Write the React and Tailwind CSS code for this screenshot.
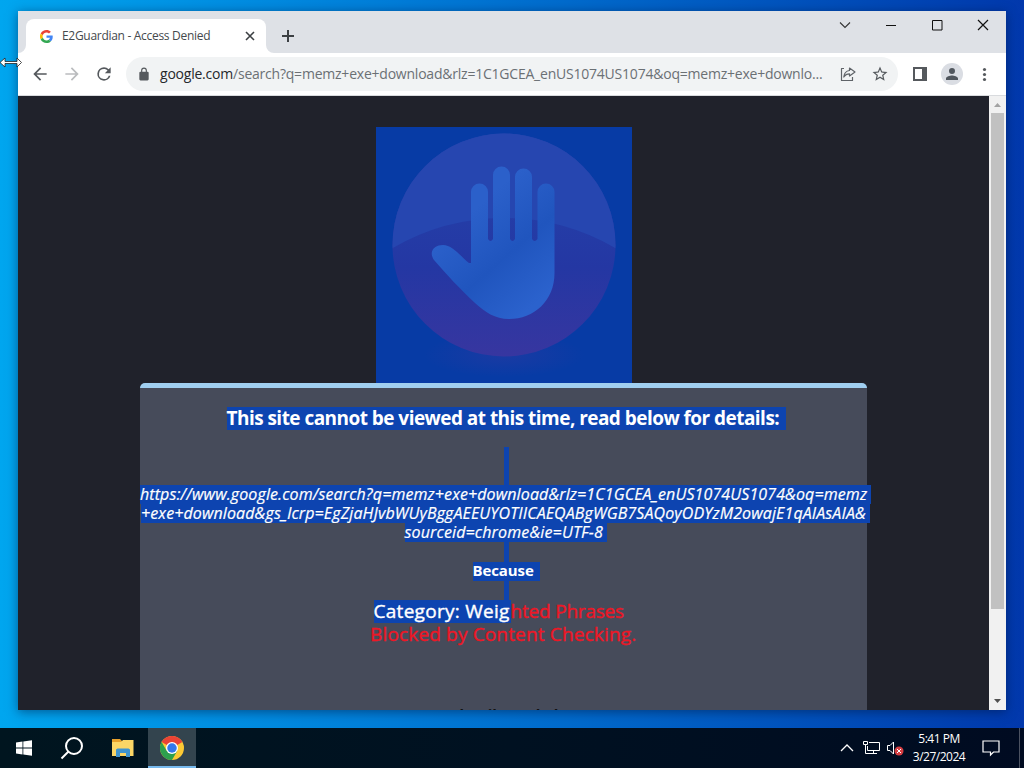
import React from "react";

const chromeFont = "font-['Open_Sans','Noto_Sans',sans-serif]";

function GoogleG() {
  return (
    <svg className="h-[13px] w-[13px] shrink-0" viewBox="0 0 48 48">
      <path fill="#EA4335" d="M24 9.5c3.5 0 6.700 1.200 9.200 3.600l6.900-6.900C35.900 2.400 30.500 0 24 0 14.600 0 6.500 5.400 2.600 13.200l8 6.200C12.400 13.700 17.700 9.500 24 9.500z" />
      <path fill="#4285F4" d="M47 24.600c0-1.600-.2-3.100-.4-4.600H24v9h12.900c-.6 3-2.300 5.500-4.800 7.200l7.700 6C44.400 38 47 31.800 47 24.600z" />
      <path fill="#FBBC05" d="M10.500 28.600A14.500 14.500 0 0 1 10.500 19.400l-8-6.200a24 24 0 0 0 0 21.600l8-6.200z" />
      <path fill="#34A853" d="M24 48c6.500 0 11.900-2.100 15.900-5.800l-7.700-6c-2.200 1.500-4.900 2.300-8.200 2.300-6.300 0-11.600-4.200-13.500-9.900l-8 6.200C6.500 42.600 14.600 48 24 48z" />
    </svg>
  );
}

function TabStrip() {
  return (
    <div className="flex h-[42px] shrink-0 bg-[#dee1e6]">
      <svg className="h-2 w-2 shrink-0 self-end" viewBox="0 0 8 8" fill="#fff"><path d="M8 0v8H0a8 8 0 0 0 8-8z" /></svg>
      <div className="mt-2 flex h-[34px] w-[240px] items-center rounded-t-lg bg-white pl-[14px] pr-[10px]">
        <GoogleG />
        <span className="ml-[9px] flex-1 whitespace-nowrap text-[12px] tracking-[-0.3px] text-[#45494d]">E2Guardian - Access Denied</span>
        <svg className="h-3 w-3" viewBox="0 0 12 12" stroke="#3c4043" strokeWidth="1.6" fill="none"><path d="M2 2l8 8M10 2l-8 8" /></svg>
      </div>
      <svg className="h-2 w-2 shrink-0 self-end" viewBox="0 0 8 8" fill="#fff"><path d="M0 0v8h8a8 8 0 0 1-8-8z" /></svg>
      <svg className="ml-[7px] mt-[18px] h-[14px] w-[14px]" viewBox="0 0 14 14" stroke="#3c4043" strokeWidth="2" fill="none"><path d="M7 1v12M1 7h12" /></svg>
      <div className="ml-auto flex pr-[17px] pt-[7px]">
        <svg className="h-[14px] w-[12px]" viewBox="0 0 12 14" stroke="#333" strokeWidth="1.100" fill="none"><path d="M1 4.500l5 5 5-5" /></svg>
        <svg className="ml-[35px] h-[14px] w-[11px]" viewBox="0 0 11 14" fill="#111"><path d="M0 7h10v1H0z" /></svg>
        <svg className="ml-[35px] h-[14px] w-[11px]" viewBox="0 0 11 14" stroke="#111" fill="none"><path d="M.5 2.500h9.500v9.500H.5z" /></svg>
        <svg className="ml-[34px] h-[14px] w-[12px]" viewBox="0 0 12 14" stroke="#111" strokeWidth="1.200" fill="none"><path d="M1 2l10 10M11 2L1 12" /></svg>
      </div>
    </div>
  );
}

function Toolbar() {
  return (
    <div className="flex h-[43px] shrink-0 items-center border-b border-[#d9dbde] bg-white pl-[12px] pr-[14px]">
      <svg className="h-5 w-5" viewBox="0 0 24 24" fill="#55595d"><path d="M20 11H7.830l5.590-5.590L12 4l-8 8 8 8 1.410-1.410L7.830 13H20v-2z" /></svg>
      <svg className="ml-3 h-5 w-5" viewBox="0 0 24 24" fill="#babcbe"><path d="M12 4l-1.410 1.410L16.170 11H4v2h12.170l-5.580 5.590L12 20l8-8z" /></svg>
      <svg className="ml-3 h-5 w-5" viewBox="0 0 24 24" fill="#55595d"><path d="M17.650 6.350A7.960 7.960 0 0 0 12 4a8 8 0 1 0 7.730 10h-2.080A6 6 0 1 1 12 6c1.660 0 3.140.69 4.220 1.780L13 11h7V4l-2.350 2.350z" /></svg>
      <div className="ml-[12px] flex h-[34px] w-[772px] shrink-0 items-center rounded-full bg-[#f1f3f4] pl-[11px]">
        <svg className="h-[14px] w-[14px] shrink-0" viewBox="0 0 24 24" fill="#55595d"><path fillRule="evenodd" d="M18 8h-1V6A5 5 0 0 0 7 6v2H6a2 2 0 0 0-2 2v11a2 2 0 0 0 2 2h12a2 2 0 0 0 2-2V10a2 2 0 0 0-2-2zM9 6a3 3 0 0 1 6 0v2H9V6z" /></svg>
        <span className="ml-[9px] w-[664px] shrink-0 whitespace-nowrap text-[14px] leading-5 tracking-[-0.22px] text-[#6b7074]"><span className="text-[#25282b]">google.com</span>/search?q=memz+exe+download&amp;rlz=1C1GCEA_enUS1074US1074&amp;oq=memz+exe+downlo...</span>
        <svg className="ml-[16px] h-4 w-4 shrink-0" viewBox="0 0 16 16" fill="none" stroke="#5f6368" strokeWidth="1.200"><path d="M4 2.500H1.500v12h11V11M9.500 2l5.500 4-5.500 4V7.800C6.500 7.800 5 9 3.800 11c.3-3.300 2.200-6 5.700-6.500V2z" strokeLinejoin="round" /></svg>
        <svg className="ml-[15px] h-[18px] w-[18px] shrink-0" viewBox="0 0 24 24" fill="#55595d"><path d="M22 9.240l-7.190-.62L12 2 9.190 8.630 2 9.240l5.460 4.730L5.820 21 12 17.270 18.180 21l-1.630-7.030L22 9.240zM12 15.400l-3.760 2.270 1-4.280-3.320-2.880 4.380-.38L12 6.100l1.710 4.040 4.380.38-3.320 2.880 1 4.280L12 15.400z" /></svg>
      </div>
      <svg className="ml-[15px] h-[14px] w-[14px]" viewBox="0 0 14 14" fill="#55595d"><path fillRule="evenodd" d="M0 0h14v14H0zM2 2v10h7V2z" /></svg>
      <div className="ml-[14px] flex h-[22px] w-[22px] items-center justify-center rounded-full bg-[#dadde3]">
        <svg className="h-[18px] w-[18px]" viewBox="0 0 24 24" fill="#50565d"><path d="M12 12a4 4 0 1 0 0-8 4 4 0 0 0 0 8zm0 2c-2.700 0-8 1.300-8 4v2h16v-2c0-2.700-5.300-4-8-4z" /></svg>
      </div>
      <svg className="ml-auto h-4 w-4" viewBox="0 0 16 16" fill="#55595d"><circle cx="8.500" cy="3.500" r="1.600" /><circle cx="8.500" cy="8.500" r="1.600" /><circle cx="8.500" cy="13.500" r="1.600" /></svg>
    </div>
  );
}

function HandPicture() {
  return (
    <svg className="mt-[31px] h-[256px] w-[256px] shrink-0 bg-[#073ba5]" viewBox="0 0 256 256">
      <defs>
        <linearGradient id="disc" x1="0" y1="0" x2="0" y2="1">
          <stop offset="0" stopColor="#2546ad" />
          <stop offset=".6" stopColor="#2437a3" />
          <stop offset="1" stopColor="#3736a0" />
        </linearGradient>
        <linearGradient id="palm" x1="0" y1="0" x2=".7" y2="1">
          <stop offset="0" stopColor="#2b60ca" />
          <stop offset=".35" stopColor="#2b60ca" />
          <stop offset=".68" stopColor="#2055be" />
          <stop offset="1" stopColor="#2b62cd" />
        </linearGradient>
        <radialGradient id="glow">
          <stop offset="0" stopColor="#1f3aa3" stopOpacity=".8" />
          <stop offset="1" stopColor="#1f3aa3" stopOpacity="0" />
        </radialGradient>
        <clipPath id="round"><circle cx="128" cy="118" r="111.500" /></clipPath>
      </defs>
      <ellipse cx="128" cy="228" rx="80" ry="22" fill="url(#glow)" />
      <circle cx="128" cy="118" r="111.500" fill="url(#disc)" />
      <path clipPath="url(#round)" d="M10 125Q65 91 128 91T246 125V0H10z" fill="#2646b0" />
      <path fill="url(#palm)" d="M95 65a8.500 8.500 0 0 1 17 0V112q2.500 4 5 0V48a8.500 8.500 0 0 1 17 0V112q2.500 4 5 0V50a8.500 8.500 0 0 1 17 0V112q2.500 4 5.500 0V65a8.500 8.500 0 0 1 17 0V146C178.500 174 158 192 133 192C119 192 109 185 99 176C85 163 70 147 58 133C52 124 59 118 67 118C77 118 86 131 93 136L95 136z" />
    </svg>
  );
}

function Caret({ className }) {
  return <div className={"ml-[5px] w-[5px] shrink-0 bg-[#0d44b0] " + className} />;
}

function BlockPage() {
  return (
    <div className="flex min-w-0 flex-1 flex-col items-center overflow-hidden bg-[#20222b] font-['Open_Sans','Noto_Sans',sans-serif]">
      <HandPicture />
      <div className="flex h-[400px] w-[727px] shrink-0 flex-col items-center whitespace-nowrap rounded-t-[5px] border-t-[5px] border-[#a0cff0] bg-[#464b5a] text-white">
        <div className="ml-[5px] mt-[19px] h-[23px] w-[559px] shrink-0 bg-[#0d44b0] text-[19px] font-bold leading-[23px] tracking-[-0.54px]">This site cannot be viewed at this time, read below for details:</div>
        <Caret className="mt-[17px] h-[38px]" />
        <div className="ml-[4px] h-[19px] w-[731px] shrink-0 bg-[#0d44b0] text-[16px] italic leading-[19px] tracking-[0.11px] [-webkit-text-stroke:0.2px_white]">https://www.google.com/search?q=memz+exe+download&amp;rlz=1C1GCEA_enUS1074US1074&amp;oq=memz</div>
        <div className="ml-[4px] h-[19px] w-[729px] shrink-0 bg-[#0d44b0] text-[16px] italic leading-[19px] tracking-[0.11px] [-webkit-text-stroke:0.2px_white]">+exe+download&amp;gs_lcrp=EgZjaHJvbWUyBggAEEUYOTIICAEQABgWGB7SAQoyODYzM2owajE1qAIAsAIA&amp;</div>
        <div className="ml-[4px] h-[19px] w-[202px] shrink-0 bg-[#0d44b0] text-[16px] italic leading-[19px] tracking-[0.14px] [-webkit-text-stroke:0.2px_white]">sourceid=chrome&amp;ie=UTF-8</div>
        <Caret className="h-[20px]" />
        <div className="ml-[5px] h-[19px] w-[67px] shrink-0 bg-[#0d44b0] text-[15px] font-bold leading-[17px] tracking-[-0.1px]">Because</div>
        <Caret className="h-[19px]" />
        <div className="flex h-[23px] w-[260px] shrink-0 text-[19px] leading-[23px]">
          <span className="w-[137px] shrink-0 bg-[#0d44b0] tracking-[0.28px] [-webkit-text-stroke:0.4px_white]">Category: Weig</span>
          <span className="tracking-[-0.2px] text-[#ed1726] [-webkit-text-stroke:0.4px_#ed1726]">hted Phrases</span>
        </div>
        <div className="h-[23px] w-[267px] shrink-0 text-[19px] leading-[23px] tracking-[0.16px] text-[#ed1726] [-webkit-text-stroke:0.4px_#ed1726]">Blocked by Content Checking.</div>
        <div className="mt-[58px] h-[20px] w-[175px] shrink-0 text-[15px] font-bold leading-[20px] tracking-[-0.15px] text-[#111]">Your details are below:</div>
      </div>
    </div>
  );
}

function Scrollbar() {
  return (
    <div className="flex w-[17px] shrink-0 flex-col items-center bg-[#f1f1f1]">
      <svg className="h-[17px] w-[17px] shrink-0" viewBox="0 0 17 17" fill="#a3a3a3"><path d="M5 11l3.500-4 3.500 4z" /></svg>
      <div className="h-[496px] w-[13px] bg-[#c1c1c1]" />
      <svg className="mt-auto h-[17px] w-[17px] shrink-0" viewBox="0 0 17 17" fill="#505050"><path d="M5 6l3.500 4 3.500-4z" /></svg>
    </div>
  );
}

function Taskbar() {
  return (
    <div className="flex h-10 shrink-0 items-center bg-linear-to-r from-[#00151f] via-[#001121] to-[#000b21] text-white">
      <svg className="ml-4 h-4 w-4" viewBox="0 0 16 16" fill="#fff"><path d="M0 2.400l6.500-.9v6H0zM7.300 1.400L16 .2v7.300H7.300zM0 8.400h6.500v6L0 13.500zM7.300 8.400H16v7.400l-8.700-1.200z" /></svg>
      <svg className="ml-[28px] h-[24px] w-[24px]" viewBox="0 0 24 24" stroke="#fff" strokeWidth="2" fill="none"><circle cx="14" cy="10" r="8" /><path d="M8.500 15.500l-7 7" /></svg>
      <svg className="ml-[27px] h-5 w-[24px]" viewBox="0 0 24 20">
        <path fill="#e7a12c" d="M1 1h8l2 2v3H1z" />
        <path fill="#fbd666" d="M1 4h9l2-2h10.500v16H1z" />
        <path fill="#3f94cf" d="M5 19v-7.500L6.500 10.500h11l1.500 1V19h-4v-4H9v4z" />
      </svg>
      <div className="ml-[13px] flex h-10 w-12 items-center justify-center border-b-2 border-[#76b9ed] bg-[#33444e] pt-[2px]">
        <svg className="h-[24px] w-[24px]" viewBox="0 0 48 48">
          <circle cx="24" cy="24" r="24" fill="#fcc934" />
          <path fill="#ea4335" d="M24 24L3.200 12A24 24 0 0 1 44.800 12z" />
          <path fill="#2da04e" d="M3.200 12A24 24 0 0 0 24 48l10.400-18L24 24 13.600 30z" />
          <circle cx="24" cy="24" r="12" fill="#fff" />
          <circle cx="24" cy="24" r="9.500" fill="#3478eb" />
        </svg>
      </div>
      <svg className="ml-auto h-3 w-[14px]" viewBox="0 0 14 12" stroke="#fff" strokeWidth="1.300" fill="none"><path d="M1 9l6-6 6 6" /></svg>
      <svg className="ml-[9px] h-4 w-[17px]" viewBox="0 0 17 16" stroke="#fff" strokeWidth="1" fill="none"><path d="M6 2.500h10.500v8H4.500V6M10.500 10.500v3M7 13.500h7M.5 1.500h4v3h-4zM2.500 4.500v9H7" /></svg>
      <svg className="ml-[7px] h-4 w-[17px]" viewBox="0 0 17 16" fill="none"><path d="M.5 5.500H3L6.500 2v12L3 10.500H.5z" stroke="#fff" /><circle cx="12" cy="11" r="4.500" fill="#d63e42" /><path d="M10 9l4 4M14 9l-4 4" stroke="#fff" /></svg>
      <div className="ml-[6px] flex w-[58px] flex-col items-center whitespace-nowrap text-[12px] leading-[18px] tracking-[-0.5px]">
        <span>5:41 PM</span>
        <span>3/27/2024</span>
      </div>
      <svg className="ml-[14px] h-[18px] w-[18px]" viewBox="0 0 18 18" stroke="#fff" strokeWidth="1.200" fill="none"><path d="M1 2h16v11h-5.500L8.500 16v-3H1z" /></svg>
      <div className="ml-[19px] mr-1 h-10 w-px bg-[#4b5261]" />
    </div>
  );
}

export default function App() {
  return (
    <div className={"relative flex h-[768px] w-[1024px] flex-col overflow-hidden bg-linear-to-r from-[#00a6ef] via-[#007bd7] via-40% to-[#0238ac] " + chromeFont}>
      <div className="flex min-h-0 flex-1 px-[18px] pb-[18px] pt-[11px]">
        <div className="flex w-[988px] flex-col shadow-[0_2px_10px_rgba(0,20,60,0.5)]">
          <TabStrip />
          <Toolbar />
          <div className="flex min-h-0 flex-1">
            <BlockPage />
            <Scrollbar />
          </div>
        </div>
      </div>
      <Taskbar />
      <svg className="absolute left-0 top-[57px] h-[11px] w-[22px]" viewBox="0 0 22 11" fill="#fff" stroke="#222" strokeWidth=".8"><path d="M0 5.500l5-4.500v3.500h12V1l4.500 4.500L17 10V6.500H5V10z" /></svg>
    </div>
  );
}
